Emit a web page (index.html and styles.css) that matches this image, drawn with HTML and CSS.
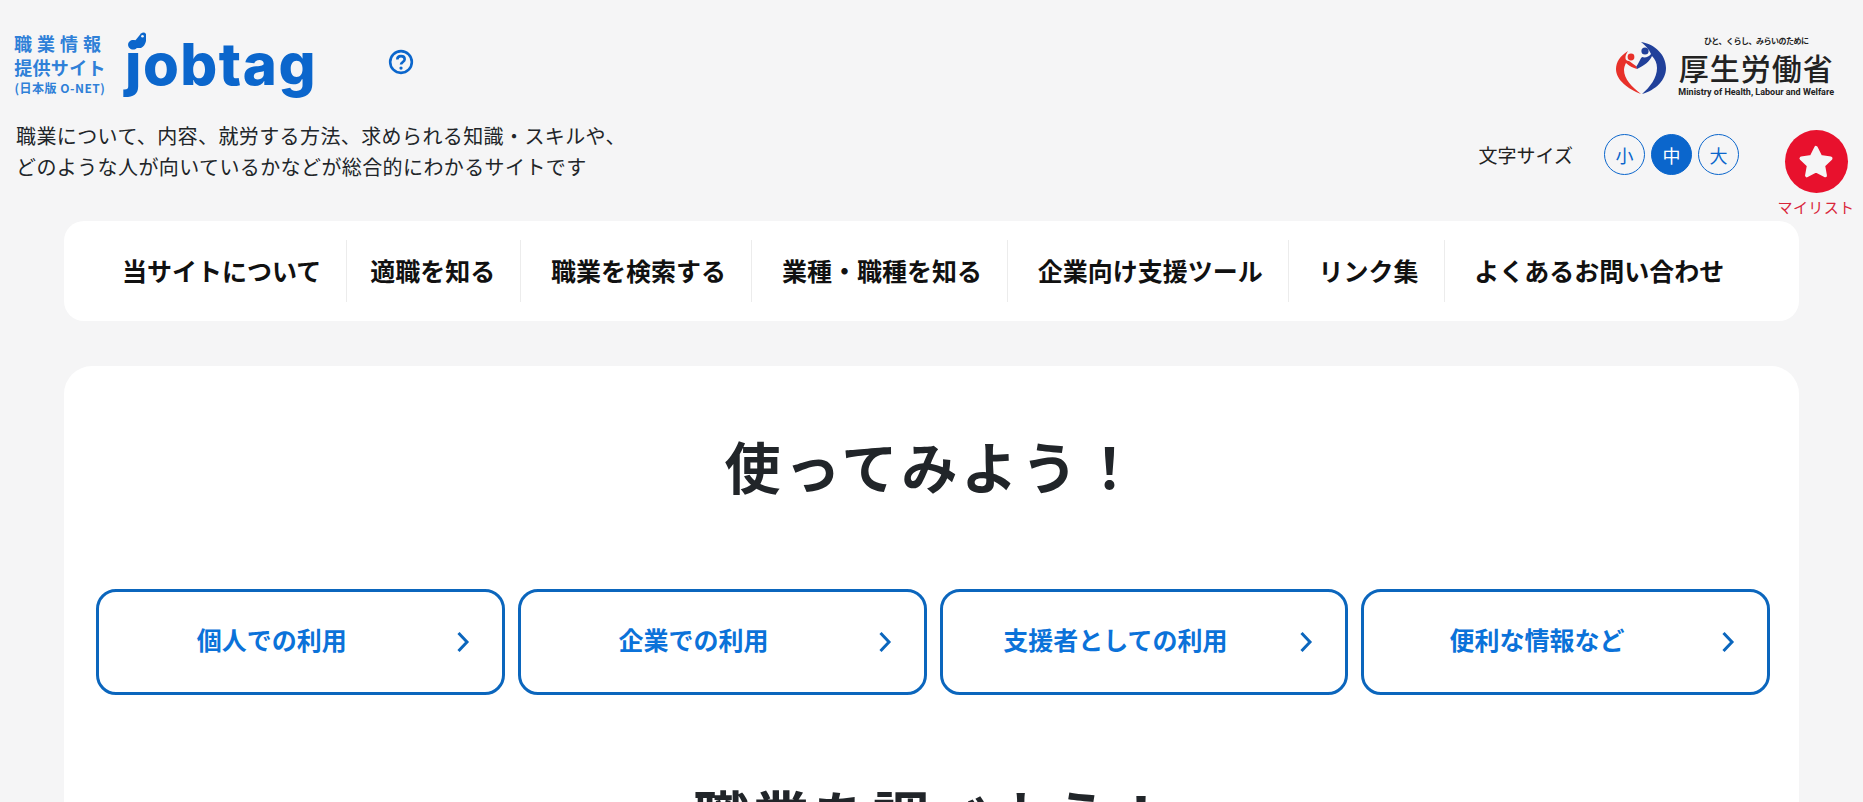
FILE: index.html
```html
<!DOCTYPE html>
<html lang="ja">
<head>
  <meta charset="UTF-8">
  <title>jobtag</title>
  <link rel="stylesheet" href="styles.css">
</head>
<body>
  <header class="header">
    <div class="header-left">
      <div class="logo-row">
        <div class="logo-sub">
          <span class="logo-sub-line spaced">職業情報</span>
          <span class="logo-sub-line">提供サイト</span>
          <span class="logo-sub-small">(日本版 O-NET)</span>
        </div>
        <div class="logo-main">
          <span class="logo-word">jobtag</span>
          <svg class="logo-tag" viewBox="0 0 14 16"><path d="M1 10 L8 1.5 Q11 -0.5 13 2 L13 9 Q12 14 8 16 L1 16 Z" fill="#0b66cc"/><circle cx="9.5" cy="4.2" r="1.3" fill="#f5f5f6"/></svg>
        </div>
        <svg class="help-icon" viewBox="0 0 24 24">
          <circle cx="12" cy="12" r="10" fill="none" stroke="#0b66cc" stroke-width="2.4"/>
          <path d="M8.6 9.6 C8.6 7.6 10.2 6.6 12 6.6 C13.9 6.6 15.4 7.7 15.4 9.5 C15.4 11.9 12 12 12 14.4" fill="none" stroke="#0b66cc" stroke-width="2.4"/>
          <circle cx="12" cy="17.6" r="1.5" fill="#0b66cc"/>
        </svg>
      </div>
      <p class="lead">職業について、内容、就労する方法、求められる知識・スキルや、<br>どのような人が向いているかなどが総合的にわかるサイトです</p>
    </div>
    <div class="header-right">
      <div class="mhlw">
        <svg class="mhlw-mark" viewBox="0 0 70 68">
          <path d="M32 8 C46 10 57 21 57 34 C57 46 47 56 33 60 C41 53 48 44 48 34 C48 29 46 25 43 22 C41 27 36 31 28 35 L27 33 C30 29 31 25 33 23 C36 24 40 23 42 20 C40 15 36 11 32 8 Z" fill="#21409a"/>
          <circle cx="36" cy="17" r="3.6" fill="#21409a"/>
          <path d="M19 17 C11 22 7 28 7 35 C7 46 19 55 32 60 C23 53 15 45 15 36 C15 33 16 31 17 29 C20 32 24 34 28 35 L27 32 C24 30 22 28 20 27 C16 27 15 23 19 17 Z" fill="#e8312a"/>
          <circle cx="22" cy="23" r="3.4" fill="#e8312a"/>
        </svg>
        <div class="mhlw-text">
          <span class="mhlw-tagline">ひと、くらし、みらいのために</span>
          <span class="mhlw-name">厚生労働省</span>
          <span class="mhlw-en">Ministry of Health, Labour and Welfare</span>
        </div>
      </div>
      <div class="tools">
        <span class="size-label">文字サイズ</span>
        <div class="size-btns">
          <span class="size-btn">小</span>
          <span class="size-btn active">中</span>
          <span class="size-btn">大</span>
        </div>
        <div class="mylist">
          <span class="mylist-circle">
            <svg viewBox="0 0 24 24"><path d="M12 2.5 L15 8.6 L21.8 9.6 L16.9 14.3 L18.1 21 L12 17.8 L5.9 21 L7.1 14.3 L2.2 9.6 L9 8.6 Z" fill="#f5f5f6" stroke="#f5f5f6" stroke-width="2.4" stroke-linejoin="round"/></svg>
          </span>
          <span class="mylist-label">マイリスト</span>
        </div>
      </div>
    </div>
  </header>

  <nav class="gnav">
    <a class="gnav-item">当サイトについて</a>
    <a class="gnav-item">適職を知る</a>
    <a class="gnav-item">職業を検索する</a>
    <a class="gnav-item">業種・職種を知る</a>
    <a class="gnav-item">企業向け支援ツール</a>
    <a class="gnav-item">リンク集</a>
    <a class="gnav-item">よくあるお問い合わせ</a>
  </nav>

  <main class="card">
    <h2 class="title">使ってみよう！</h2>
    <div class="use-grid">
      <a class="use-btn"><span>個人での利用</span><svg class="chev" viewBox="0 0 14 24"><path d="M2.5 3 L11 12 L2.5 21"/></svg></a>
      <a class="use-btn"><span>企業での利用</span><svg class="chev" viewBox="0 0 14 24"><path d="M2.5 3 L11 12 L2.5 21"/></svg></a>
      <a class="use-btn"><span>支援者としての利用</span><svg class="chev" viewBox="0 0 14 24"><path d="M2.5 3 L11 12 L2.5 21"/></svg></a>
      <a class="use-btn"><span>便利な情報など</span><svg class="chev" viewBox="0 0 14 24"><path d="M2.5 3 L11 12 L2.5 21"/></svg></a>
    </div>
    <h2 class="title title-next">職業を調べよう！</h2>
  </main>
</body>
</html>
```
FILE: styles.css
```css
html, body {
  height: 802px;
  overflow: hidden;
}

body {
  margin: 0;
  background-color: #f5f5f6;
  color: #212529;
  font-family: "Noto Sans CJK JP", "Noto Sans", sans-serif;
}

.header {
  display: flex;
  justify-content: space-between;
  height: 221px;
  padding: 0 0 0 16px;
}

.logo-row {
  display: flex;
  align-items: flex-start;
  margin-left: -2px;
  padding-top: 31px;
}

.logo-sub {
  display: flex;
  flex-direction: column;
  align-items: center;
  width: 92px;
  color: #2f80d8;
  font-weight: 700;
}

.logo-sub-line {
  font-size: 18px;
  line-height: 24px;
  letter-spacing: 0.3px;
  white-space: nowrap;
}

.logo-sub-line.spaced {
  letter-spacing: 5px;
}

.logo-sub-small {
  font-size: 12px;
  line-height: 18px;
  letter-spacing: 0.5px;
  white-space: nowrap;
}

.logo-main {
  position: relative;
  margin-left: 19px;
  width: 190px;
}

.logo-word {
  display: block;
  font-family: "Inter", sans-serif;
  font-weight: 800;
  font-size: 58px;
  line-height: 62px;
  letter-spacing: 1.5px;
  color: #0b66cc;
  margin-top: 2px;
}

.logo-tag {
  position: absolute;
  left: 8px;
  top: 1px;
  width: 14px;
  height: 16px;
}

.help-icon {
  width: 26px;
  height: 26px;
  margin: 18px 0 0 73px;
}

.lead {
  margin: 23px 0 0;
  font-size: 20px;
  line-height: 31px;
  letter-spacing: 0.4px;
  color: #212529;
}

.header-right {
  display: flex;
  flex-direction: column;
  align-items: flex-end;
}

.mhlw {
  display: flex;
  align-items: center;
  margin: 30px 29px 0 0;
}

.mhlw-mark {
  width: 70px;
  height: 68px;
  margin: 4px -1px 0 0;
}

.mhlw-text {
  display: flex;
  flex-direction: column;
  align-items: center;
  color: #222;
}

.mhlw-tagline {
  font-size: 8px;
  line-height: 14px;
  font-weight: 700;
  letter-spacing: -0.5px;
}

.mhlw-name {
  font-size: 30px;
  line-height: 38px;
  font-weight: 500;
  letter-spacing: 1px;
}

.mhlw-en {
  font-family: "Roboto", sans-serif;
  font-size: 9px;
  line-height: 12px;
  font-weight: 700;
  white-space: nowrap;
}

.tools {
  display: flex;
  align-items: flex-start;
  margin-top: 28px;
  margin-right: 7px;
}

.size-label {
  font-size: 19px;
  line-height: 30px;
  margin: 10px 31px 0 0;
  color: #222;
}

.size-btns {
  display: flex;
  gap: 6px;
  margin: 4px 37px 0 0;
}

.size-btn {
  display: flex;
  align-items: center;
  justify-content: center;
  box-sizing: border-box;
  width: 41px;
  height: 41px;
  border: 1px solid #0b66cc;
  border-radius: 50%;
  font-size: 18px;
  color: #0b66cc;
}

.size-btn.active {
  background-color: #0b66cc;
  color: #fff;
}

.mylist {
  display: flex;
  flex-direction: column;
  align-items: center;
  width: 80px;
}

.mylist-circle {
  display: flex;
  align-items: center;
  justify-content: center;
  width: 63px;
  height: 63px;
  border-radius: 50%;
  background-color: #e8112d;
}

.mylist-circle svg {
  width: 36px;
  height: 36px;
}

.mylist-label {
  margin-top: 3px;
  font-size: 15px;
  line-height: 22px;
  letter-spacing: 0.4px;
  white-space: nowrap;
  color: #d9263a;
}

.gnav {
  display: flex;
  align-items: center;
  box-sizing: border-box;
  height: 100px;
  margin: 0 64px;
  padding: 0 0 0 58px;
  background-color: #fff;
  border-radius: 20px;
}

.gnav-item {
  display: flex;
  align-items: center;
  height: 62px;
  padding: 0 25px 2px 29.8px;
  box-sizing: border-box;
  font-size: 25px;
  font-weight: 700;
  color: #111;
  white-space: nowrap;
  border-left: 1px solid #ececec;
}

.gnav-item:first-child {
  border-left: none;
  padding-left: 0;
}

.gnav-item:nth-child(2) {
  padding-left: 23px;
}

.card {
  margin: 45px 64px 0;
  padding: 0 29px 0 32px;
  background-color: #fff;
  border-radius: 28px;
  height: 700px;
}

.title {
  margin: 0;
  padding-top: 58px;
  font-size: 56px;
  line-height: 82px;
  font-weight: 700;
  letter-spacing: 4px;
  text-align: center;
  color: #212529;
}

.use-grid {
  display: grid;
  grid-template-columns: repeat(4, 1fr);
  gap: 13px;
  margin-top: 83px;
}

.use-btn {
  position: relative;
  display: flex;
  align-items: center;
  justify-content: center;
  box-sizing: border-box;
  height: 106px;
  padding: 0 57px 0 0;
  border: 3px solid #0b66bd;
  border-radius: 20px;
  font-size: 25px;
  font-weight: 700;
  color: #0b72d9;
}

.use-btn span {
  margin-top: -7px;
}

.chev {
  position: absolute;
  right: 32px;
  top: 38px;
  width: 14px;
  height: 24px;
  fill: none;
  stroke: #0b66bd;
  stroke-width: 3;
}

.title-next {
  padding-top: 78px;
}
```
